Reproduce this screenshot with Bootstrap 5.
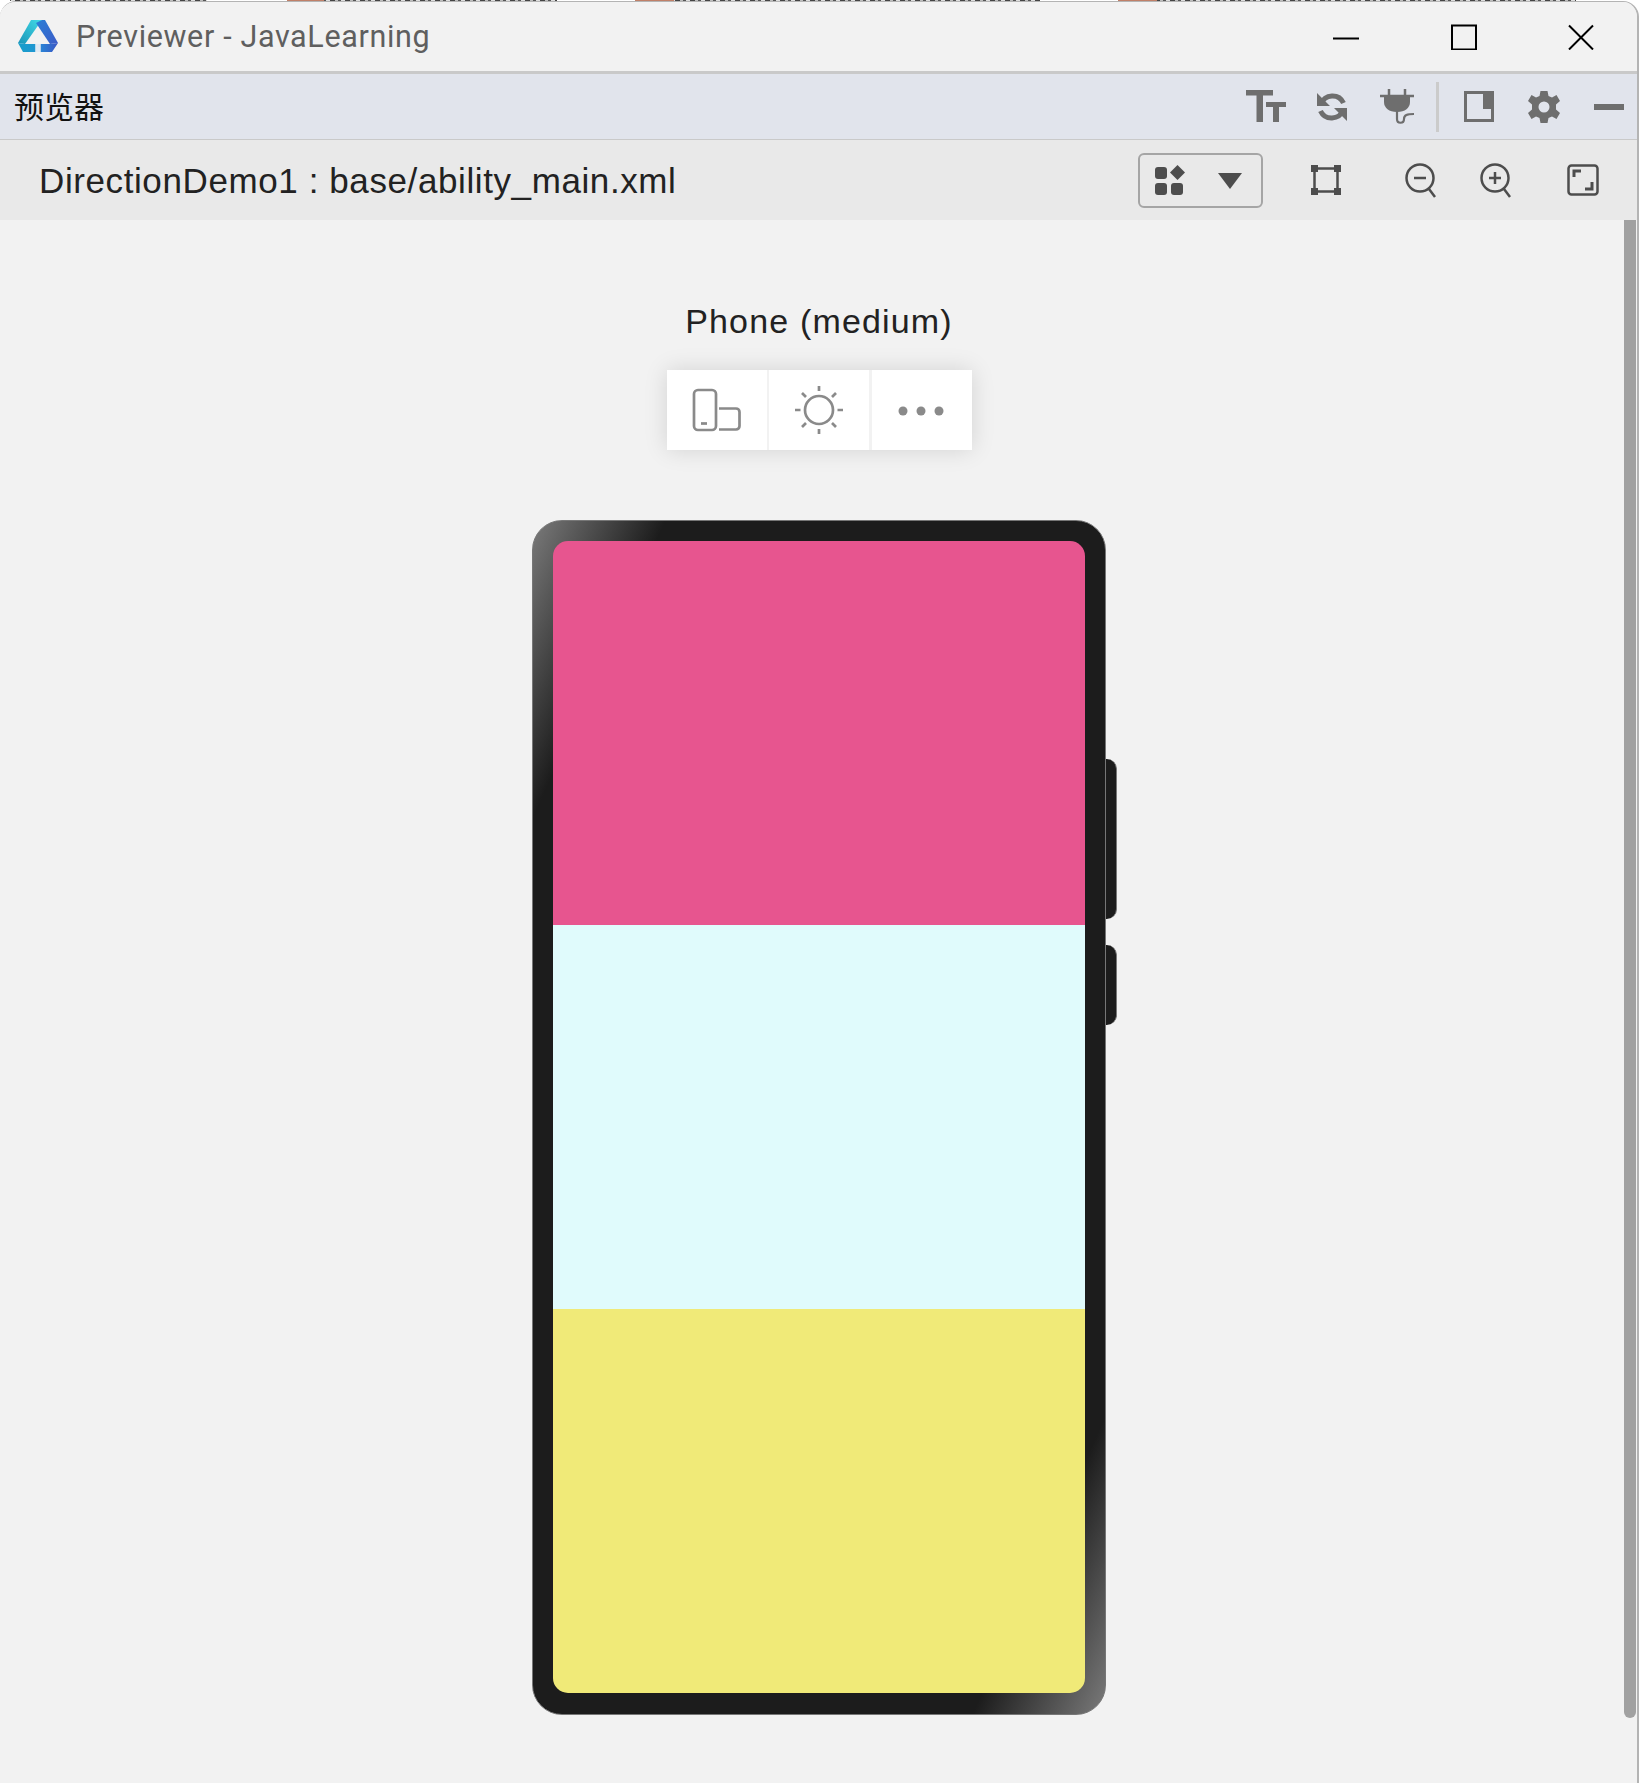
<!DOCTYPE html>
<html lang="zh">
<head>
<meta charset="utf-8">
<title>Previewer</title>
<link href="https://cdn.jsdelivr.net/npm/bootstrap@5.3.0/dist/css/bootstrap.min.css" rel="stylesheet">
<style>
html,body{height:100%;margin:0;overflow:hidden;background:#fff}
.desk-strip{height:1px;background:
 linear-gradient(#c08068,#c08068) 287px 0/37px 1px no-repeat,
 linear-gradient(#c08068,#c08068) 635px 0/39px 1px no-repeat,
 linear-gradient(#c08068,#c08068) 1118px 0/39px 1px no-repeat,
 linear-gradient(#fff,#fff) 207px 0/80px 1px no-repeat,
 linear-gradient(#fff,#fff) 557px 0/78px 1px no-repeat,
 linear-gradient(#fff,#fff) 1040px 0/78px 1px no-repeat,
 linear-gradient(#fff,#fff) 1576px 0/63px 1px no-repeat,
 linear-gradient(#fff,#fff) 0 0/10px 1px no-repeat,
 repeating-linear-gradient(90deg,#444 0 5px,#bbb 5px 8px,#555 8px 11px,#ddd 11px 15px)}
.app-win{position:relative;width:1639px;height:1782px;background:#f2f2f2;border-top:1px solid #b4b4b4;border-right:2px solid #b4b4b4;border-top-left-radius:16px;border-top-right-radius:16px;overflow:hidden;box-sizing:border-box}
.title-bar{height:69px;background:#f2f2f2;border-bottom:3px solid #c9c9c9;box-sizing:content-box;padding-left:18px}
.title-txt{font:30.5px/1 Roboto,sans-serif;letter-spacing:.65px;color:#5f5f5f;margin-left:18px;margin-top:2px}
.win-ctls{gap:91.5px;margin-right:43px}
.tool-bar{height:66px;background:#e1e4ec;border-bottom:1px solid #c9c9c9;padding-left:14px}
.tool-name{font:30px/1 "Noto Sans CJK SC",sans-serif;color:#111;margin-top:-4px}
.tool-set{margin-right:13px}
.sub-bar{height:80px;background:#e9e9e9;padding-left:39px}
.file-name{font:35px/1 "Liberation Sans",sans-serif;color:#222;letter-spacing:.6px}
.view-set{margin-right:38px}
.ico{display:block;flex:none}
.split{width:3px;height:50px;background:#cbcbcb}
.drop-box{width:125px;height:55px;border:2px solid #a5a5a5;border-radius:6px;padding-left:15px;padding-right:19px}
.stage{height:1563px;padding-left:1px}
.dev-label{font:34px/1 "Liberation Sans",sans-serif;color:#222;letter-spacing:1.17px;margin-top:84px}
.dev-tools{margin-top:32px;height:80px;gap:2.5px;box-shadow:0 0 22px rgba(0,0,0,.13)}
.dev-cell{width:100px;height:80px;background:#fff}
.phone-wrap{position:relative;margin-top:70px}
.phone-body{width:574px;height:1195px;padding:20px;padding-bottom:21px;border-radius:30px;background:linear-gradient(114deg,#7a7a7a 0,#1c1c1c 12%,#1c1c1c 88%,#7a7a7a 100%);border:1px solid #777;box-sizing:border-box}
.phone-screen{height:100%;border-radius:15px;overflow:hidden}
.pane-a{background:#e7558f}
.pane-b{background:#e0fbfc}
.pane-c{background:#f0ea78}
.side-key{position:absolute;left:574px;width:11px;background:#1c1c1c;border-right:1px solid #777;border-radius:0 10px 10px 0}
.key-a{top:239px;height:160px}
.key-b{top:425px;height:80px}
.scroll-thumb{position:absolute;right:1px;top:0;width:12px;height:1498px;background:#a1a1a1;border-radius:0 0 6px 6px}
.gap-l21{margin-left:21px}.gap-l25{margin-left:25px}.gap-l30{margin-left:30px}.gap-l31{margin-left:31px}.gap-l34{margin-left:34px}
.gap-l43{margin-left:43px}.gap-l48{margin-left:48px}.gap-l55{margin-left:55px}.gap-l64{margin-left:64px}
</style>
</head>
<body>
<div class="desk-strip"></div>
<div class="app-win d-flex flex-column">
  <div class="title-bar d-flex align-items-center flex-shrink-0">
    <svg class="ico" width="40" height="33" viewBox="0 0 40 33">
      <defs>
        <linearGradient id="lgA" x1="0" y1="1" x2="1" y2="0"><stop offset="0" stop-color="#1b94b8"/><stop offset="1" stop-color="#40dbe6"/></linearGradient>
        <linearGradient id="lgB" x1="0" y1="0" x2="1" y2="1"><stop offset="0" stop-color="#2a7fd6"/><stop offset="1" stop-color="#3d5cc8"/></linearGradient>
        <linearGradient id="lgC" x1="0" y1="0" x2="1" y2="0"><stop offset="0" stop-color="#189fc9"/><stop offset="1" stop-color="#1f96d2"/></linearGradient>
        <linearGradient id="lgD" x1="0" y1="0" x2="1" y2="0"><stop offset="0" stop-color="#2a85d6"/><stop offset="1" stop-color="#3a55c4"/></linearGradient>
      </defs>
      <polygon points="13,0 24,0 7,24 0,23" fill="url(#lgA)"/>
      <polygon points="24,0 27,0 40,23 32,24 18,3" fill="url(#lgB)"/>
      <polygon points="0,23 7,24 17.5,24 17.5,32 5,32" fill="url(#lgC)"/>
      <polygon points="22.5,24 32,24 40,23 34,32 22.5,32" fill="url(#lgD)"/>
      <rect x="17.500" y="24" width="5" height="8" fill="#dfe9f3"/>
    </svg>
    <span class="title-txt">Previewer - JavaLearning</span>
    <div class="win-ctls ms-auto d-flex align-items-center">
      <svg class="ico" width="26" height="26" viewBox="0 0 26 26"><path d="M0 14.500H26" stroke="#000" stroke-width="2"/></svg>
      <svg class="ico" width="26" height="26" viewBox="0 0 26 26"><rect x="1" y="1.500" width="24" height="24" fill="none" stroke="#000" stroke-width="2"/></svg>
      <svg class="ico" width="26" height="26" viewBox="0 0 26 26"><path d="M1 1.500L25 25.500M25 1.500L1 25.500" stroke="#000" stroke-width="2" fill="none"/></svg>
    </div>
  </div>
  <div class="tool-bar d-flex align-items-center flex-shrink-0">
    <span class="tool-name">预览器</span>
    <div class="tool-set ms-auto d-flex align-items-center">
      <svg class="ico" width="40" height="33" viewBox="0 0 40 33" fill="#6e6e6e"><path d="M0 0H27V5.500H17V32H10.500V5.500H0ZM20 12H40V17H33V32H27V17H20Z"/></svg>
      <svg class="ico gap-l30" width="32" height="32" viewBox="0 0 32 32" fill="none"><path d="M5 13A12.200 12.200 0 0 1 27.500 12" stroke="#6e6e6e" stroke-width="5"/><path d="M27 19A12.200 12.200 0 0 1 4.500 20" stroke="#6e6e6e" stroke-width="5"/><path d="M1 2V15H14Z M31 30V17H18Z" fill="#6e6e6e"/></svg>
      <svg class="ico gap-l31" width="36" height="35" viewBox="0 0 36 35" fill="none"><path d="M10 0V6M26 0V6M1 7H35" stroke="#6e6e6e" stroke-width="2.500"/><path d="M5 7H31V13C31 19 26 23 18 23C10 23 5 19 5 13Z" fill="#6e6e6e"/><path d="M18 22V30C18 35 25 35 25 30C25 26 28 25 35 25" stroke="#6e6e6e" stroke-width="2.200"/></svg>
      <div class="split gap-l21"></div>
      <svg class="ico gap-l25" width="30" height="31" viewBox="0 0 30 31" fill="none"><rect x="1.500" y="1.500" width="27" height="28" stroke="#6e6e6e" stroke-width="3"/><rect x="19" y="0" width="11" height="18" fill="#6e6e6e"/></svg>
      <svg class="ico gap-l34" width="32" height="34" viewBox="0 0 32 34"><path fill="#6e6e6e" fill-rule="evenodd" d="M12.500 1H19.500L20.500 6L24 7.500L28.500 5L32 11L28 14.500V19.500L32 23L28.500 29L24 26.500L20.500 28L19.500 33H12.500L11.500 28L8 26.500L3.500 29L0 23L4 19.500V14.500L0 11L3.500 5L8 7.500L11.500 6ZM16 11.500A5.500 5.500 0 1 0 16 22.500A5.500 5.500 0 1 0 16 11.500Z"/></svg>
      <svg class="ico gap-l34" width="30" height="6" viewBox="0 0 30 6"><rect width="30" height="6" fill="#6e6e6e"/></svg>
    </div>
  </div>
  <div class="sub-bar d-flex align-items-center flex-shrink-0">
    <span class="file-name">DirectionDemo1 : base/ability_main.xml</span>
    <div class="view-set ms-auto d-flex align-items-center">
      <div class="drop-box d-flex align-items-center justify-content-between">
        <svg class="ico" width="30" height="30" viewBox="0 0 30 30" fill="#4d4d4d"><rect x="0" y="2" width="12" height="12" rx="3"/><rect x="16" y="18" width="12" height="12" rx="3"/><rect x="0" y="18" width="12" height="12" rx="3"/><path d="M22.500 0L30 7.500L22.500 15L15 7.500Z"/></svg>
        <svg class="ico" width="24" height="17" viewBox="0 0 24 17" fill="#4d4d4d"><path d="M0 1H24L12 17Z"/></svg>
      </div>
      <svg class="ico gap-l48" width="30" height="30" viewBox="0 0 30 30" fill="#4d4d4d"><rect x="3.500" y="3.500" width="23" height="23" fill="none" stroke="#4d4d4d" stroke-width="2.500"/><rect x="0" y="0" width="7" height="7"/><rect x="23" y="0" width="7" height="7"/><rect x="0" y="23" width="7" height="7"/><rect x="23" y="23" width="7" height="7"/></svg>
      <svg class="ico gap-l64" width="32" height="36" viewBox="0 0 32 36" fill="none" stroke="#4d4d4d" stroke-width="2.500"><circle cx="15" cy="16" r="13.500"/><path d="M9 16H21"/><path d="M24 27L30 35"/></svg>
      <svg class="ico gap-l43" width="32" height="36" viewBox="0 0 32 36" fill="none" stroke="#4d4d4d" stroke-width="2.500"><circle cx="15" cy="16" r="13.500"/><path d="M9 16H21M15 10V22"/><path d="M24 27L30 35"/></svg>
      <svg class="ico gap-l55" width="32" height="32" viewBox="0 0 32 32" fill="none"><rect x="1.500" y="1.500" width="29" height="29" rx="3" stroke="#4d4d4d" stroke-width="2.500"/><path d="M7 13V7H14M25 18V25H18" stroke="#4d4d4d" stroke-width="3"/></svg>
    </div>
  </div>
  <div class="stage position-relative d-flex flex-column align-items-center">
    <div class="dev-label">Phone (medium)</div>
    <div class="dev-tools d-flex">
      <div class="dev-cell d-flex align-items-center justify-content-center">
        <svg width="50" height="44" viewBox="0 0 50 44" fill="none" stroke="#8a8a8a" stroke-width="2.700"><rect x="2" y="2" width="22" height="40" rx="4"/><path d="M9 35.500H15"/><path d="M27 20.500H44C46 20.500 47.500 22 47.500 24V38C47.500 40 46 41.500 44 41.500H27"/></svg>
      </div>
      <div class="dev-cell d-flex align-items-center justify-content-center">
        <svg width="50" height="50" viewBox="0 0 50 50" fill="none" stroke="#8a8a8a" stroke-width="2.700"><circle cx="25" cy="25" r="14"/><path d="M25 1V6M25 44V49M1 25H6.500M43.500 25H49M8 8L12 12M38 38L42 42M42 8L38 12M12 38L8 42"/></svg>
      </div>
      <div class="dev-cell d-flex align-items-center justify-content-center">
        <svg width="48" height="12" viewBox="0 0 48 12" fill="#8a8a8a"><circle cx="5" cy="7" r="4.500"/><circle cx="23" cy="7" r="4.500"/><circle cx="41" cy="7" r="4.500"/></svg>
      </div>
    </div>
    <div class="phone-wrap">
      <div class="phone-body">
        <div class="phone-screen d-flex flex-column">
          <div class="pane-a flex-fill"></div>
          <div class="pane-b flex-fill"></div>
          <div class="pane-c flex-fill"></div>
        </div>
      </div>
      <div class="side-key key-a"></div>
      <div class="side-key key-b"></div>
    </div>
    <div class="scroll-thumb"></div>
  </div>
</div>
<script src="https://cdn.jsdelivr.net/npm/bootstrap@5.3.0/dist/js/bootstrap.bundle.min.js"></script>
</body>
</html>
